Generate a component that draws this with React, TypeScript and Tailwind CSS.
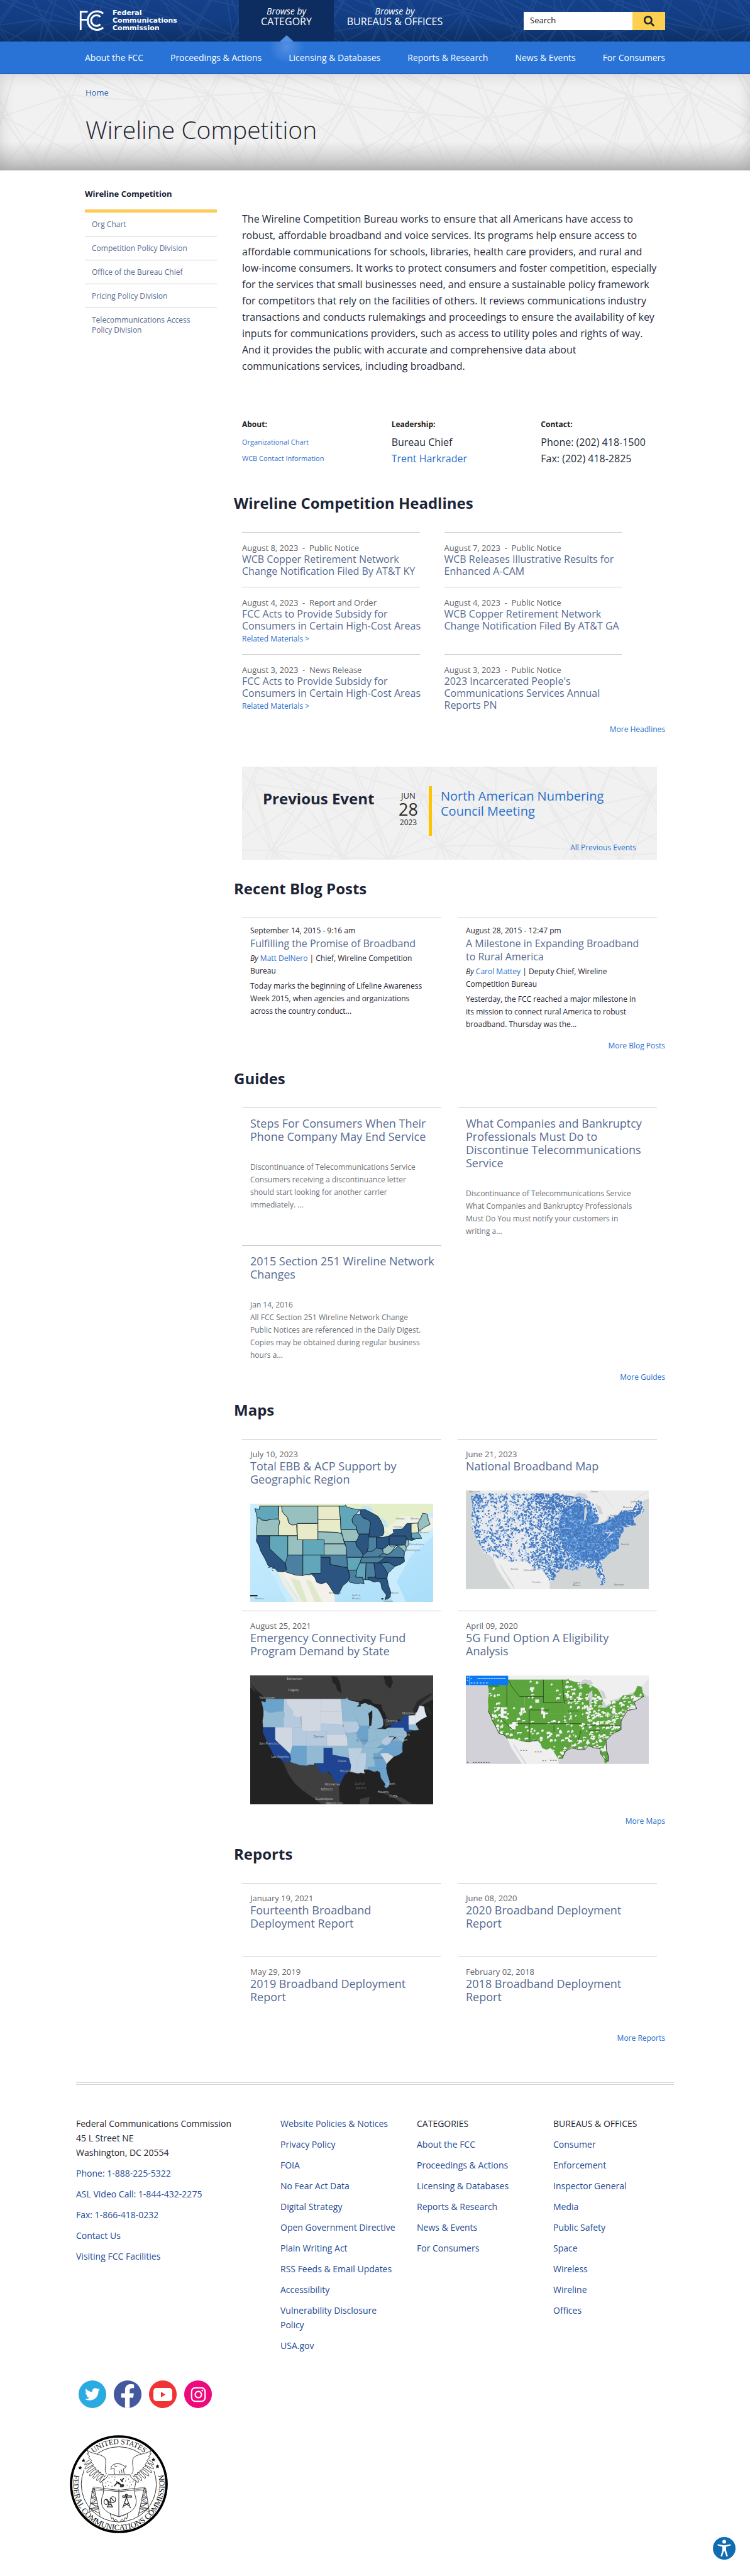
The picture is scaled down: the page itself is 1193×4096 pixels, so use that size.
import React from "react";
import { FaSearch, FaTwitter, FaFacebookF, FaInstagram } from "react-icons/fa";

/* ---------- helpers ---------- */

function makeRandom(seed: number) {
  let s = seed;
  return () => {
    s = (s * 1664525 + 1013904223) % 4294967296;
    return s / 4294967296;
  };
}

/* ---------- line texture used behind the header, hero and event box ---------- */

function webPath(seed: number, cols: number, rows: number, step: number) {
  const rnd = makeRandom(seed);
  const pts: number[][][] = [];
  for (let r = 0; r <= rows; r++) {
    const row: number[][] = [];
    for (let c = 0; c <= cols; c++) {
      row.push([
        Math.round((c - 0.5 + (r % 2) * 0.5 + (rnd() - 0.5) * 0.5) * step),
        Math.round((r - 0.5 + (rnd() - 0.5) * 0.5) * step),
      ]);
    }
    pts.push(row);
  }
  let d = "";
  const link = (a: number[], b?: number[]) => {
    if (b) d += `M${a[0]} ${a[1]}L${b[0]} ${b[1]}`;
  };
  for (let r = 0; r <= rows; r++) {
    for (let c = 0; c <= cols; c++) {
      const p = pts[r][c];
      link(p, pts[r][c + 1]);
      link(p, pts[r + 1]?.[c]);
      link(p, pts[r + 1]?.[c + 1]);
      link(p, pts[r + 1]?.[c - 1]);
      link(p, pts[r + 2]?.[c + 1]);
      link(p, pts[r + 2]?.[c - 1]);
      link(p, pts[r + 1]?.[c + 2]);
    }
  }
  return d;
}

const webs = {
  header: webPath(7, 18, 2, 75),
  hero: webPath(21, 12, 3, 110),
  event: webPath(5, 8, 3, 95),
};

function Web({ d, color, opacity, view }: { d: string; color: string; opacity: number; view: string }) {
  return (
    <svg
      className="absolute inset-0 h-full w-full"
      viewBox={view}
      preserveAspectRatio="xMidYMid slice"
      aria-hidden="true"
    >
      <path d={d} fill="none" stroke={color} strokeOpacity={opacity} strokeWidth="2" />
    </svg>
  );
}

/* ---------- maps ---------- */

const states: Record<string, string> = {
  WA: "84,37 185,37 185,106 150,107 120,114 95,112 85,102 70,100 65,75 58,50 82,55",
  OR: "70,100 85,102 95,112 120,114 150,107 185,106 192,120 185,150 185,196 68,196 65,160 70,130",
  ID: "187,37 202,37 205,65 220,85 235,100 238,125 255,138 282,137 285,196 185,196 185,150 192,120 185,106",
  MT: "202,37 397,37 397,130 285,130 282,137 255,138 238,125 235,100 220,85 205,65",
  WY: "285,130 397,130 397,218 287,218",
  ND: "397,37 510,37 518,107 397,107",
  SD: "397,107 518,107 520,150 522,185 500,178 397,175",
  NE: "397,175 500,178 522,185 530,200 540,240 430,240 430,218 397,218",
  KS: "430,240 540,240 548,255 550,300 430,300",
  MN: "510,37 540,37 545,30 550,40 580,50 625,57 600,80 590,90 580,110 585,130 603,145 605,163 520,163 518,107",
  IA: "520,163 605,163 610,180 620,195 605,225 538,227 530,200",
  WI: "590,90 600,80 625,80 640,100 668,110 680,125 672,187 620,187 610,180 603,145 585,130 580,110",
  MI: "625,57 650,55 690,75 720,92 735,115 750,150 752,180 745,195 710,205 672,203 672,185 680,125 668,110 640,100 625,80",
  IL: "620,187 672,187 668,203 667,260 658,290 640,300 625,275 603,250 600,228 612,210",
  IN: "668,203 710,203 712,262 690,278 660,283 667,260",
  OH: "710,205 745,205 780,197 780,240 765,255 745,268 712,262",
  MO: "538,227 600,228 603,250 625,275 640,300 632,312 552,312 550,300 548,255",
  KY: "640,300 660,283 690,278 712,262 745,268 748,290 720,310 636,312",
  TN: "632,312 760,310 740,328 720,342 622,342",
  AR: "552,312 632,312 622,342 605,380 560,382 555,365",
  LA: "560,382 605,380 600,418 638,420 645,455 625,450 610,455 566,445 568,410",
  MS: "622,342 656,342 652,432 638,432 638,420 600,418 605,380",
  AL: "656,342 698,342 708,418 665,420 668,432 652,432",
  GA: "698,342 735,342 755,370 772,400 768,425 708,425",
  FL: "665,420 708,418 708,425 768,425 775,460 788,500 785,525 770,537 760,530 765,515 740,480 735,450 720,440 700,445 668,432",
  SC: "735,342 775,338 812,360 772,400 755,370",
  NC: "760,310 860,313 862,335 840,350 812,360 775,338 735,342 720,342 740,328",
  VA: "720,310 748,290 770,297 790,285 815,262 830,250 850,270 862,285 860,313 760,310",
  WV: "748,290 745,268 765,255 780,240 785,252 815,250 790,285 770,297",
  PA: "780,197 868,197 875,215 870,245 780,247",
  NY: "780,197 805,180 800,163 850,160 875,130 898,130 900,210 920,215 900,222 875,215 868,197",
  NJ: "872,215 885,222 885,245 872,258 866,246",
  MD: "815,248 866,246 872,262 865,282 850,270 830,252",
  VT: "898,130 935,128 938,180 898,182",
  ME: "935,125 950,100 960,75 985,80 990,110 1000,135 970,150 940,172 935,150",
  MA: "898,182 938,180 955,210 930,212 900,208",
  CA: "68,196 137,196 137,265 222,345 228,375 215,390 180,388 165,370 130,358 115,325 90,280 80,250 66,225",
  NV: "137,196 235,196 235,320 222,345 137,265",
  UT: "235,196 287,196 287,218 316,218 316,300 235,300",
  CO: "316,218 430,218 430,300 316,300",
  AZ: "235,300 316,300 316,410 280,408 222,390 228,375 222,345 228,322",
  NM: "316,300 413,300 413,398 358,398 358,405 328,405 316,410",
  OK: "413,300 552,300 555,368 510,360 462,350 462,312 413,312",
  TX: "413,312 462,312 462,350 510,360 555,368 568,410 560,440 530,465 508,510 485,508 455,460 440,445 415,455 390,445 380,420 358,398 413,398",
};

function colorsOf(groups: Record<string, string>) {
  const out: Record<string, string> = {};
  Object.entries(groups).forEach(([color, list]) => list.split(" ").forEach((s) => (out[s] = color)));
  return out;
}

const supportColors = colorsOf({
  "#e9ebc8": "ID WY ND SD VT",
  "#97c0bf": "OR MT UT NE KS IA ME WV NJ MD",
  "#62a6b9": "WA NV CO NM MN AR MS MA",
  "#4b80a0": "AZ WI MO OK KY TN VA AL LA SC IN",
  "#2b5480": "CA TX IL MI OH PA NY GA FL NC",
});

const demandColors = colorsOf({
  "#d0d7e1": "MT ND SD WY NV KS SC",
  "#dfe6ef": "ME VT",
  "#b5c9df": "ID UT CO NE IA WV",
  "#bccfe0": "AR LA MS",
  "#92bad2": "OR MN WI MI NM OK IN OH KY TN PA MO AL MD NJ MA",
  "#6ba3cd": "WA AZ IL VA NC FL GA",
  "#1f4491": "CA TX NY",
});

const mexico =
  "M180 388L222 390L280 408L316 410L358 400L380 420L390 445L415 455L440 445L455 460L485 508L495 640H330L290 530L250 470L225 430Z";
const baja = "M180 388L200 392L225 440L262 500L300 560L285 565L240 500L205 445Z";
const canada =
  "M33 -120H1040V60L1000 75L985 80L960 75L935 125L898 130L875 130L850 160L800 163L790 185L745 200L752 180L735 115L690 75L625 57L550 40L540 37H84L58 20L33 -10Z";
const lakes =
  "M610 60L640 35L680 40L695 62L670 70L650 58L625 66ZM668 118L690 100L690 140L684 185L672 190L672 150ZM730 92L760 110L775 150L755 150L745 120ZM745 205L790 182L800 187L765 206ZM800 160L845 150L850 160L805 168Z";

function StateShapes({ colors, stroke, width = 2 }: { colors: Record<string, string> | string; stroke?: string; width?: number }) {
  return (
    <g strokeWidth={width} strokeLinejoin="round">
      {Object.entries(states).map(([id, points]) => {
        const fill = typeof colors === "string" ? colors : colors[id];
        return <polygon key={id} points={points} fill={fill} stroke={stroke ?? fill} />;
      })}
    </g>
  );
}

function Labels({ items, fill, size = 14 }: { items: [number, number, string][]; fill: string; size?: number }) {
  return (
    <g fill={fill} fontSize={size} fontFamily="Open Sans, sans-serif">
      {items.map(([x, y, t]) => (
        <text key={t} x={x} y={y}>
          {t}
        </text>
      ))}
    </g>
  );
}

function SupportMap() {
  return (
    <svg viewBox="33 24 983 527" className="block w-full" role="img" aria-label="Map of EBB and ACP support by state">
      <defs>
        <linearGradient id="sea" x1="0" y1="0" x2="1" y2="1">
          <stop offset="0" stopColor="#cdeeff" />
          <stop offset="1" stopColor="#a9def9" />
        </linearGradient>
      </defs>
      <rect x="33" y="24" width="983" height="527" fill="url(#sea)" />
      <path d="M33 60L70 200L140 380L230 551H330L200 388L760 440L800 551H870L820 440L900 300L1016 200V24Z" fill="#c9ecfc" />
      <path d={canada} fill="#e4efc9" />
      <path d="M760 160L850 90L1016 100V160L960 180L900 130L850 160L790 190Z" fill="#eff0e4" />
      <path d={mexico} fill="#f3f1e9" />
      <path d="M250 420L300 440L340 551H310L280 490ZM330 430L360 440L420 551H380Z" fill="#dfe8c8" />
      <path d={baja} fill="#f0ede2" />
      <path d={lakes} fill="#c4e6f4" />
      <StateShapes colors={supportColors} stroke="#10242e" width={3} />
      <path d="M130 368L150 362M148 374L165 372M150 382L158 384" stroke="#10242e" strokeWidth="3" />
      <path d="M738 535H748M756 536H764" stroke="#000" strokeWidth="7" />
      <path d="M33 518H72" stroke="#111" strokeWidth="7" />
      <Labels
        fill="#5b6468"
        items={[
          [60, 536, "Mexico"],
          [815, 110, "Ottawa"],
          [895, 108, "Montréal"],
          [800, 152, "Toronto"],
          [945, 182, "Boston"],
          [888, 246, "Philadelphia"],
          [868, 278, "Washington"],
          [455, 508, "Monterrey"],
          [580, 520, "Gulf of"],
          [580, 536, "Mexico"],
          [790, 506, "Miami"],
          [750, 550, "Havana"],
        ]}
      />
    </svg>
  );
}

function coverage(x: number, y: number) {
  const patch = Math.sin(x * 0.061 + Math.sin(y * 0.043) * 2.4) * Math.sin(y * 0.057 + Math.sin(x * 0.037) * 2);
  if (x > 400 + y * 0.1 && x < 540 && y < 120) return 1;
  if (x > 820 && y < 300) return 0.95;
  if (x < 110) return 0.7 + patch * 0.3;
  if (x < 350) return (y < 110 ? 0.42 : 0.27) + patch * 0.3;
  if (x < 540) return 0.42 + ((x - 350) / 190) * 0.45 + patch * 0.25;
  return 0.9 + patch * 0.12;
}

function coverageDots() {
  const rnd = makeRandom(99);
  const layers = { pale: "", light: "", mid: "" };
  for (let i = 0; i < 14000; i++) {
    const x = Math.round(55 + rnd() * 945);
    const y = Math.round(35 + rnd() * 505);
    const s = 4 + Math.round(rnd() * 5);
    const roll = rnd();
    const tone = rnd();
    const c = coverage(x, y);
    if (roll > c) continue;
    const cell = `M${x} ${y}h${s}v${s}h-${s}z`;
    const deep = c >= 0.95 ? 0.9 : y > 340 && x > 520 ? 0.5 : 0.66;
    if (tone < deep) layers.mid += cell;
    else if (tone < deep + (1 - deep) * 0.55) layers.light += cell;
    else layers.pale += cell;
  }
  return layers;
}

const dots = coverageDots();

function BroadbandMap() {
  return (
    <svg viewBox="28 39 986 531" className="block w-full" role="img" aria-label="National broadband map">
      <defs>
        <clipPath id="usShape">
          {Object.entries(states).map(([id, p]) => (
            <polygon key={id} points={p} />
          ))}
        </clipPath>
      </defs>
      <rect x="28" y="39" width="986" height="531" fill="#d2d5d6" />
      <g transform="translate(-7 16)">
        <path d={canada} fill="#ececec" />
        <path d="M33 0H1040V22H33Z" fill="#ececec" />
        <path d={mexico} fill="#efefef" />
        <path d={baja} fill="#efefef" />
        <path d={lakes} fill="#cfd3d5" />
        <path d="M880 140L960 60L1016 30M760 20L830 120" stroke="#d8d8d8" strokeWidth="3" fill="none" />
        <StateShapes colors="#e9eaed" />
        <g clipPath="url(#usShape)">
          <path
            d="M560 120L640 90L700 110L780 200L900 130L960 160L860 330L780 400L640 400L560 330L530 240Z"
            fill="#5c93d6"
          />
          <path d={dots.pale} fill="#a9d0f6" />
          <path d={dots.light} fill="#66a3e6" />
          <path d={dots.mid} fill="#4277be" />
        </g>
        <path d="M674 125L686 105L688 140L680 180L672 188Z" fill="#d5d6d6" />
      </g>
      <Labels
        fill="#5c5c5c"
        size={12}
        items={[
          [45, 49, "Vancouver"],
          [700, 49, "Ontario"],
          [915, 103, "Québec"],
          [875, 134, "Montréal"],
          [805, 178, "Toronto"],
          [606, 540, "Gulf of"],
          [606, 554, "Mexico"],
          [828, 551, "Bahamas"],
          [865, 333, "Norfolk"],
          [270, 466, "Sonora"],
          [340, 474, "Chihuahua"],
          [385, 536, "Torreón"],
        ]}
      />
    </svg>
  );
}

function DemandMap() {
  return (
    <svg viewBox="33 22 983 694" className="block w-full" role="img" aria-label="Emergency Connectivity Fund demand by state">
      <rect x="33" y="22" width="983" height="694" fill="#222222" />
      <path d="M33 22H1016V150L960 180L885 240L830 270L760 310L740 180L650 165L550 150H97L80 130L33 85Z" fill="#3f3f3f" />
      <path d="M208 480L255 490L340 505L400 500L470 560L508 600L515 716H420L330 650L280 590Z" fill="#3f3f3f" />
      <path d="M205 480L235 520L265 560L300 610L328 645L320 645L270 600L240 555Z" fill="#3f3f3f" />
      <path d="M620 716L625 685L675 675L668 716ZM720 645L770 655L850 680L900 710L960 716H860L800 675Z" fill="#3f3f3f" />
      <path d="M470 25L500 30L515 60L525 120L500 100L490 70L475 60ZM750 25H790L800 60L785 95L760 70ZM33 60L60 95L100 130L130 165L105 165L70 125Z" fill="#242424" />
      <path d="M905 210L930 160L1000 120L1016 122L960 165L920 215ZM970 190L1000 240L1012 230L990 195Z" fill="#2a2a2a" />
      <g transform="matrix(.942 0 0 .955 39 114)">
        <StateShapes colors={demandColors} />
        <path d={lakes} fill="#222" />
      </g>
      <Labels
        fill="#b9bcc0"
        size={17}
        items={[
          [230, 44, "Edmonton"],
          [235, 107, "Calgary"],
          [82, 146, "Vancouver"],
          [82, 393, "San Francisco"],
          [146, 464, "Los Angeles"],
          [503, 487, "Dallas"],
          [515, 541, "Houston"],
          [434, 612, "Monterrey"],
          [412, 641, "MÉXICO"],
          [382, 692, "Guadalajara"],
          [440, 714, "Mexico City"],
          [718, 655, "Havana"],
          [780, 677, "CUBA"],
          [762, 610, "Miami"],
          [762, 271, "Toronto"],
          [850, 232, "Montréal"],
          [815, 347, "New York"],
          [785, 375, "Washington"],
        ]}
      />
      <Labels
        fill="#5f6a75"
        size={17}
        items={[
          [373, 355, "Denver"],
          [602, 378, "St. Louis"],
          [690, 472, "Atlanta"],
          [595, 611, "Gulf of"],
          [600, 633, "Mexico"],
        ]}
      />
    </svg>
  );
}

function eligibilityHoles() {
  const rnd = makeRandom(1234);
  let d = "";
  for (let i = 0; i < 1250; i++) {
    const x = Math.round(60 + rnd() * 940);
    const y = Math.round(37 + rnd() * 500);
    const keep = x > 640 ? (y < 120 ? 0.2 : 0.95) : x > 520 ? 0.55 : x < 150 ? (y > 200 ? 0.9 : 0.3) : y > 300 ? 0.28 : 0.1;
    if (rnd() > keep) continue;
    const a = 5 + Math.round(rnd() * 12);
    const b = 4 + Math.round(rnd() * 10);
    d += `M${x} ${y}h${a}l4 ${b}h-${a}l-3 6l-5 -7z`;
  }
  return d;
}

const holes = eligibilityHoles();

function EligibilityMap() {
  return (
    <svg viewBox="28 1043 986 477" className="block w-full" role="img" aria-label="5G Fund option A eligibility">
      <rect x="28" y="1043" width="986" height="477" fill="#d2d1d8" />
      <path d="M28 1043H1014V1090L980 1100L940 1130L860 1160L790 1215L740 1125L650 1085L580 1066H28Z" fill="#efeff0" />
      <path d="M1014 1060L960 1120L1014 1160Z" fill="#e4e4e8" />
      <g transform="matrix(.9 0 0 .9 89 1033)">
        <path d={mexico} fill="#efeff0" />
        <path d={baja} fill="#efeff0" />
        <StateShapes colors="#5ba53c" />
        <g clipPath="url(#usShape)">
          <path d={holes} fill="#f3f1f3" />
          <path
            d="M232 202h36v12h-20v12h18v14h-18v12h20v14h-36zM304 290h30v22h-14v22h-26v-14h-12v-16h12zM438 155h22v20h-22zM408 82h24v14h-6v14h-12v-10h-10zM350 205h26v16h-14v24h-20v-14h8zM475 208h12v20h10v40h-12v-24h-12z"
            fill="#f3f1f3"
            transform="translate(-90 0)"
          />
        </g>
        <path d={lakes} fill="#cfcfd6" />
        <path
          d="M178 37V196M68 75H130M397 37V175H510M187 37L205 75L255 138H397M315 218H430M137 265L222 345M312 218V400M235 300H620M460 312V350M520 163H605M545 225H605M640 312H860M622 342L605 400L600 418M510 37L522 185M656 342H735"
          fill="none"
          stroke="#1d2b18"
          strokeWidth="2.5"
        />
        <path
          d="M66 225L80 250L90 280L115 325L130 358L165 370L180 388M566 445L610 455L645 455L668 432L700 445L735 450L740 480L765 515L785 525L788 500L775 460L772 400L812 360L862 335L862 285L885 245L900 222L955 210L940 172L1000 135M508 510L530 465L566 445M280 408L358 400"
          fill="none"
          stroke="#2a2a30"
          strokeWidth="3"
        />
      </g>
      <rect x="28" y="1045" width="228" height="50" fill="#0a79f5" />
      <path d="M47 1045V1095" stroke="#cfe4ff" strokeWidth="2" />
      <path d="M54 1060h8M90 1060h150M54 1084h10M70 1084h8M86 1084h10M104 1084h10M120 1084h10M138 1084h10M34 1055h6M34 1070h6" stroke="#d7e9ff" strokeWidth="5" strokeDasharray="7 2" />
      <path d="M34 1512h8M66 1512h90M322 1447h38M400 1455h36M440 1503h26M482 1501h42" stroke="#707078" strokeWidth="4" strokeDasharray="8 6" />
    </svg>
  );
}

/* ---------- logo, seal and round icons ---------- */

function FccMark() {
  return (
    <svg viewBox="66 54 140 120" className="h-[34px] w-10" fill="none" stroke="#fff" aria-hidden="true">
      <path d="M73.5 167V63.500H113M73 108H108" strokeWidth="10" />
      <path d="M200 74A52 52 0 1 0 200 152" strokeWidth="11" />
      <path d="M184 92A30 30 0 1 0 184 134" strokeWidth="11" />
    </svg>
  );
}

function Star({ x, y }: { x: number; y: number }) {
  return (
    <path
      transform={`translate(${x} ${y})`}
      d="M0 -11L3 -4L10 -3L5 2L7 10L0 6L-7 10L-5 2L-10 -3L-3 -4Z"
      fill="#111"
    />
  );
}

function Tower({ x }: { x: number }) {
  return (
    <g transform={`translate(${x} 700)`} stroke="#222" fill="none">
      <path d="M-4 0L-24 130M4 0L36 150M-4 0H4L-6 20L10 35L-10 52L16 66L-14 84L24 100L-18 112L32 136M-12 20H8M-10 50H14M-14 82H22M-18 112H30" strokeWidth="3" />
      <path d="M-8 20L14 52L-14 80L28 112L-22 128" strokeWidth="2" />
    </g>
  );
}

function Wing() {
  return (
    <g fill="#fff" stroke="#222" strokeWidth="3" strokeLinejoin="round">
      <path d="M168 490C200 520 262 510 272 545C278 580 262 600 278 625L270 655L250 665C215 690 170 650 155 600C150 570 190 560 185 540Z" stroke="none" />
      <path d="M168 490C190 520 255 512 270 540C280 575 258 600 278 625" fill="none" />
      <path d="M168 490L180 512L172 514L186 530L180 534L196 552L190 556L206 574L202 580L218 592L216 600L232 604L232 614L246 616L248 628L260 626L264 640L272 632" fill="none" />
      <path
        d="M186 548C160 560 150 580 166 572L190 562M192 566C160 580 150 604 168 594L202 576M204 582C170 600 160 624 178 614L214 590M216 600C184 616 176 644 194 632L228 606M230 612C200 630 196 656 212 644L242 616M246 626C222 640 216 668 230 658L256 632M258 636C240 650 234 678 248 668L266 646"
        fill="none"
      />
    </g>
  );
}

function Seal() {
  return (
    <svg viewBox="78 414 530 530" className="block size-[156px]" role="img" aria-label="United States Federal Communications Commission seal">
      <defs>
        <path id="arcTop" d="M125 680A218 218 0 0 1 561 680" />
        <path id="arcBottom" d="M113 590A247 247 0 1 0 573 590" />
      </defs>
      <circle cx="343" cy="679" r="258" fill="#fff" stroke="#000" strokeWidth="13" />
      <circle cx="343" cy="680" r="203" fill="none" stroke="#111" strokeWidth="3" />
      <g fontFamily="Liberation Serif, serif" fill="#111">
        <text textAnchor="middle" fontSize="40">
          <textPath href="#arcTop" startOffset="50%">
            UNITED STATES
          </textPath>
        </text>
        <text textAnchor="middle" fontSize="43">
          <textPath href="#arcBottom" startOffset="50%">
            FEDERAL COMMUNICATIONS COMMISSION
          </textPath>
        </text>
      </g>
      <Star x={152} y={551} />
      <Star x={134} y={590} />
      <Star x={530} y={546} />
      <Star x={552} y={583} />
      <Tower x={206} />
      <g transform="matrix(-1 0 0 1 690 0)">
        <Tower x={206} />
        <Wing />
      </g>
      <Wing />
      <path d="M203 694L343 712L486 696M203 701L343 720L486 703M203 708L343 728L486 710" fill="none" stroke="#222" strokeWidth="2" />
      <path
        d="M322 626C318 612 314 604 320 596C308 590 302 596 301 600C296 578 320 566 340 569C352 568 366 576 372 582L384 580C380 588 376 594 368 596L372 626"
        fill="#fff"
        stroke="#222"
        strokeWidth="3"
      />
      <path d="M318 580L334 584M344 606L350 622M358 600L360 620" stroke="#222" strokeWidth="3" />
      <path d="M296 838L304 866L312 860L318 878L326 868L344 886L362 868L370 878L376 860L386 866L392 838L344 856Z" fill="#fff" stroke="#222" strokeWidth="3" />
      <path
        d="M286 628H404C406 640 420 656 436 664C428 700 424 720 434 750C446 800 420 834 344 853C264 834 240 800 252 750C266 720 262 690 250 664C266 656 280 644 286 628Z"
        fill="#fff"
        stroke="#222"
        strokeWidth="3"
      />
      <path d="M260 702L343 712L428 702M343 706V850M262 710L343 720L426 710" fill="none" stroke="#222" strokeWidth="3" />
      <g fill="#333">
        {[
          [290, 645], [306, 640], [318, 655], [284, 664], [300, 670], [272, 672], [288, 686], [306, 692], [322, 642],
          [382, 640], [396, 652], [380, 662], [404, 668], [388, 684], [412, 682], [402, 694], [420, 664], [270, 690],
        ].map(([x, y]) => (
          <circle key={`${x}-${y}`} cx={x} cy={y} r="2.500" />
        ))}
      </g>
      <path d="M318 690L334 672M358 662L370 646M330 664L346 680M352 652L364 668M340 668L356 684" stroke="#222" strokeWidth="6" />
      <ellipse cx="360" cy="688" rx="12" ry="8" fill="#333" transform="rotate(-20 360 688)" />
      <g fill="none" stroke="#222" strokeWidth="4">
        <ellipse cx="275" cy="775" rx="12" ry="14" />
        <ellipse cx="311" cy="762" rx="15" ry="16" />
        <path d="M275 760L290 785M300 752L318 772M295 772L282 802M295 772L308 802M286 790H304M278 802H312" />
        <path d="M384 732V755M384 750L364 808M384 750L406 808M374 780L398 795M396 780L370 798M364 742H376M392 742H410M368 750H400" />
        <circle cx="368" cy="746" r="5" />
        <circle cx="408" cy="746" r="5" />
        <circle cx="384" cy="740" r="6" />
      </g>
    </svg>
  );
}

function AccessIcon() {
  return (
    <svg viewBox="0 0 36 36" className="block size-9" aria-hidden="true">
      <circle cx="18" cy="18" r="18" fill="#0f6cb0" />
      <circle cx="18" cy="7.500" r="3" fill="#fff" />
      <path
        d="M7.500 11.500L18 13.200L28.500 11.500L28.600 13.300L21 15.600L21 21L23.700 30.500L21.400 31L18.600 22.500H17.400L14.600 31L12.300 30.500L15 21V15.600L7.400 13.300Z"
        fill="#fff"
      />
    </svg>
  );
}

/* ---------- small text blocks ---------- */

function SectionTitle({ children }: { children: React.ReactNode }) {
  return <h2 className="mb-[30px] text-2xl leading-8 font-bold text-[#1c2436]">{children}</h2>;
}

function More({ children }: { children: React.ReactNode }) {
  return (
    <p className="mt-1 text-right text-[12px] leading-[18px]">
      <a href="#" className="text-[#2a6fcb]">
        {children}
      </a>
    </p>
  );
}

type Headline = { date: string; kind: string; title: string; related?: boolean };

const headlines: Headline[] = [
  { date: "August 8, 2023", kind: "Public Notice", title: "WCB Copper Retirement Network Change Notification Filed By AT&T KY" },
  { date: "August 7, 2023", kind: "Public Notice", title: "WCB Releases Illustrative Results for Enhanced A-CAM" },
  { date: "August 4, 2023", kind: "Report and Order", title: "FCC Acts to Provide Subsidy for Consumers in Certain High-Cost Areas", related: true },
  { date: "August 4, 2023", kind: "Public Notice", title: "WCB Copper Retirement Network Change Notification Filed By AT&T GA" },
  { date: "August 3, 2023", kind: "News Release", title: "FCC Acts to Provide Subsidy for Consumers in Certain High-Cost Areas", related: true },
  { date: "August 3, 2023", kind: "Public Notice", title: "2023 Incarcerated People's Communications Services Annual Reports PN" },
];

const posts = [
  {
    date: "September 14, 2015 - 9:16 am",
    title: "Fulfilling the Promise of Broadband",
    author: "Matt DelNero",
    role: "Chief, Wireline Competition Bureau",
    body: "Today marks the beginning of Lifeline Awareness Week 2015, when agencies and organizations across the country conduct...",
  },
  {
    date: "August 28, 2015 - 12:47 pm",
    title: "A Milestone in Expanding Broadband to Rural America",
    author: "Carol Mattey",
    role: "Deputy Chief, Wireline Competition Bureau",
    body: "Yesterday, the FCC reached a major milestone in its mission to connect rural America to robust broadband. Thursday was the...",
  },
];

const guides = [
  {
    title: "Steps For Consumers When Their Phone Company May End Service",
    body: "Discontinuance of Telecommunications Service Consumers receiving a discontinuance letter should start looking for another carrier immediately. ...",
  },
  {
    title: "What Companies and Bankruptcy Professionals Must Do to Discontinue Telecommunications Service",
    body: "Discontinuance of Telecommunications Service What Companies and Bankruptcy Professionals Must Do You must notify your customers in writing a...",
  },
  {
    title: "2015 Section 251 Wireline Network Changes",
    date: "Jan 14, 2016",
    body: "All FCC Section 251 Wireline Network Change Public Notices are referenced in the Daily Digest. Copies may be obtained during regular business hours a...",
  },
];

const maps = [
  { date: "July 10, 2023", title: "Total EBB & ACP Support by Geographic Region", Map: SupportMap },
  { date: "June 21, 2023", title: "National Broadband Map", Map: BroadbandMap },
  { date: "August 25, 2021", title: "Emergency Connectivity Fund Program Demand by State", Map: DemandMap },
  { date: "April 09, 2020", title: "5G Fund Option A Eligibility Analysis", Map: EligibilityMap },
];

const reports = [
  { date: "January 19, 2021", title: "Fourteenth Broadband Deployment Report" },
  { date: "June 08, 2020", title: "2020 Broadband Deployment Report" },
  { date: "May 29, 2019", title: "2019 Broadband Deployment Report" },
  { date: "February 02, 2018", title: "2018 Broadband Deployment Report" },
];

const sideLinks = [
  "Org Chart",
  "Competition Policy Division",
  "Office of the Bureau Chief",
  "Pricing Policy Division",
  "Telecommunications Access Policy Division",
];

const footerColumns = [
  {
    links: [
      "Website Policies & Notices", "Privacy Policy", "FOIA", "No Fear Act Data", "Digital Strategy",
      "Open Government Directive", "Plain Writing Act", "RSS Feeds & Email Updates", "Accessibility",
      "Vulnerability Disclosure Policy", "USA.gov",
    ],
  },
  {
    heading: "CATEGORIES",
    links: ["About the FCC", "Proceedings & Actions", "Licensing & Databases", "Reports & Research", "News & Events", "For Consumers"],
  },
  {
    heading: "BUREAUS & OFFICES",
    links: ["Consumer", "Enforcement", "Inspector General", "Media", "Public Safety", "Space", "Wireless", "Wireline", "Offices"],
  },
];

/* ---------- page parts ---------- */

function Header() {
  return (
    <header>
      <div className="relative bg-linear-to-b from-[#15418a] via-[#133d82] to-[#0d2f66]">
        <Web d={webs.header} color="#6f9be0" opacity={0.13} view="0 0 1193 66" />
        <div className="relative mx-auto flex h-[66px] w-full max-w-[951px] items-stretch">
          <a href="#" className="flex w-[259px] items-center gap-[13px] pl-[5px] text-white">
            <FccMark />
            <span className="font-['DejaVu_Sans'] text-[11px] leading-3 font-bold">
              Federal
              <br />
              Communications
              <br />
              Commission
            </span>
          </a>
          <button type="button" className="relative flex w-[151px] flex-col items-center bg-[#0d2d60] pt-2.5 text-white">
            <span className="text-[14px] leading-4 italic">Browse by</span>
            <span className="text-[16px] leading-4">CATEGORY</span>
            <span className="absolute bottom-0 left-1/2 size-0 -translate-x-1/2 border-x-[11px] border-b-[10px] border-x-transparent border-b-[#5590e0]" />
          </button>
          <button type="button" className="flex w-[194px] flex-col items-center pt-2.5 text-white">
            <span className="text-[14px] leading-4 italic">Browse by</span>
            <span className="text-[16px] leading-4">BUREAUS &amp; OFFICES</span>
          </button>
          <form className="mr-3.5 ml-auto flex h-[29px] self-center" onSubmit={(e) => e.preventDefault()}>
            <input
              type="text"
              aria-label="Search"
              placeholder="Search"
              className="w-[173px] bg-white px-2.5 text-[13px] text-black placeholder:text-[#111]"
            />
            <button type="submit" aria-label="Submit search" className="flex w-[52px] items-center justify-center bg-[#fdd14f] text-[#1c2436]">
              <FaSearch className="size-[17px]" />
            </button>
          </form>
        </div>
      </div>
      <nav className="relative border-b-2 border-[#2564c4] bg-[#2973d6]" aria-label="Category">
        <div className="absolute inset-x-0 top-0 mx-auto flex h-12 w-full max-w-[951px] pl-[299px]">
          <div className="h-8 w-[72px] bg-[radial-gradient(circle_at_50%_25%,#5490e2,transparent_65%)]" />
        </div>
        <ul className="relative mx-auto flex h-[50px] w-full max-w-[951px] items-center justify-between px-3.5 text-[14px] text-white">
          {footerColumns[1].links.map((l) => (
            <li key={l}>
              <a href="#">{l}</a>
            </li>
          ))}
        </ul>
      </nav>
    </header>
  );
}

function Hero() {
  return (
    <div className="relative bg-[#f1f1f1]">
      <Web d={webs.hero} color="#9a9a9a" opacity={0.1} view="0 0 1193 153" />
      <div className="absolute inset-0 bg-linear-to-b from-transparent from-70% to-[#bdbdbd] shadow-[inset_0_0_24px_rgba(0,0,0,0.14)]" />
      <div className="relative mx-auto h-[153px] w-full max-w-[951px] px-[15px] pt-5">
        <a href="#" className="block text-[13px] leading-[18px] text-[#2f66b5]">
          Home
        </a>
        <h1 className="mt-5 text-[39px] leading-[60px] font-light text-[#1f2430]">Wireline Competition</h1>
      </div>
    </div>
  );
}

function Sidebar() {
  return (
    <aside className="w-[210px] shrink-0 pt-[29px]">
      <h2 className="text-[13px] leading-4 font-bold text-[#1c2436]">Wireline Competition</h2>
      <ul className="mt-[17px] border-t-[5px] border-[#fdcb58]">
        {sideLinks.map((l, i) => (
          <li
            key={l}
            className={
              i < sideLinks.length - 1
                ? "border-b border-[#cfcfcf] px-[11px] pt-[11px] pb-2.5"
                : "px-[11px] pt-[11px]"
            }
          >
            <a href="#" className="block text-[12px] leading-4 text-[#566b91]">
              {l}
            </a>
          </li>
        ))}
      </ul>
    </aside>
  );
}

function PreviousEvent() {
  return (
    <section className="relative mx-[13px] mt-[50px] overflow-hidden bg-[#f1f1f1]">
      <Web d={webs.event} color="#9a9a9a" opacity={0.08} view="0 0 660 148" />
      <div className="relative px-[33px] pt-[31px] pb-2.5">
        <div className="flex">
          <h2 className="w-[209px] pt-1 text-2xl leading-8 font-bold text-[#1c2436]">Previous Event</h2>
          <div className="flex w-[55px] shrink-0 flex-col items-center pt-2 pr-2.5 text-[#2b2b2b]">
            <span className="text-[13px] leading-3.5">JUN</span>
            <span className="text-[27px] leading-[30px]">28</span>
            <span className="text-[12px] leading-3 font-medium">2023</span>
          </div>
          <div className="h-[79px] w-[5px] shrink-0 bg-[#ffc400]" />
          <h3 className="max-w-[300px] pt-1 pl-3.5 text-[20px] leading-6">
            <a href="#" className="text-[#2a6fcb]">
              North American Numbering Council Meeting
            </a>
          </h3>
        </div>
        <p className="mt-2.5 text-right text-[12px] leading-[18px]">
          <a href="#" className="text-[#2a6fcb]">
            All Previous Events
          </a>
        </p>
      </div>
    </section>
  );
}

function Main() {
  return (
    <main className="min-w-0 flex-1">
      <div className="px-[13px] pt-16">
        <p className="text-[16px] leading-[26px] text-[#1f2a3c]">
          The Wireline Competition Bureau works to ensure that all Americans have access to robust, affordable
          broadband and voice services. Its programs help ensure access to affordable communications for schools,
          libraries, health care providers, and rural and low-income consumers. It works to protect consumers and
          foster competition, especially for the services that small businesses need, and ensure a sustainable policy
          framework for competitors that rely on the facilities of others. It reviews communications industry
          transactions and conducts rulemakings and proceedings to ensure the availability of key inputs for
          communications providers, such as access to utility poles and rights of way. And it provides the public with
          accurate and comprehensive data about communications&nbsp;services, including broadband.
        </p>
        <div className="mt-[71px] -mr-[53px] grid grid-cols-3 text-[16px] leading-[26px] text-[#222a38]">
          <div>
            <h3 className="mb-1.5 text-[12px] leading-[18px] font-bold text-[#222]">About:</h3>
            <p className="text-[11px] leading-[26px]">
              <a href="#" className="text-[#2a6fcb]">Organizational Chart</a>
              <br />
              <a href="#" className="text-[#2a6fcb]">WCB Contact Information</a>
            </p>
          </div>
          <div>
            <h3 className="mb-1.5 text-[12px] leading-[18px] font-bold text-[#222]">Leadership:</h3>
            <p>Bureau Chief</p>
            <p>
              <a href="#" className="text-[#2a6fcb]">Trent Harkrader</a>
            </p>
          </div>
          <div>
            <h3 className="mb-1.5 text-[12px] leading-[18px] font-bold text-[#222]">Contact:</h3>
            <p>Phone: (202) 418-1500</p>
            <p>Fax: (202) 418-2825</p>
          </div>
        </div>
      </div>

      <section className="mt-[42px]">
        <SectionTitle>Wireline Competition Headlines</SectionTitle>
        <div className="mr-[69px] ml-[13px] grid grid-cols-2 gap-x-[39px]">
          {headlines.map((h) => (
            <article key={h.title + h.kind} className="border-t border-[#c9cbce] pt-[15px] pb-[15px]">
              <p className="text-[13px] leading-[18px] whitespace-pre text-[#5f6368]">
                {h.date}
                {"  -  "}
                {h.kind}
              </p>
              <h3 className="-mr-3 text-[16px] leading-[19px]">
                <a href="#" className="text-[#566b91]">
                  {h.title}
                </a>
              </h3>
              {h.related && (
                <a href="#" className="block pt-px text-[12px] leading-[19px] text-[#2a6fcb]">
                  Related Materials &gt;
                </a>
              )}
            </article>
          ))}
        </div>
        <More>More Headlines</More>
      </section>

      <PreviousEvent />

      <section className="mt-[30px]">
        <SectionTitle>Recent Blog Posts</SectionTitle>
        <div className="mx-[13px] grid grid-cols-2 gap-x-[26px]">
          {posts.map((p) => (
            <article key={p.title} className="border-t border-[#c9cbce] px-[13px] pt-2.5 pb-[11px] text-[12px] leading-5 text-[#1d2130]">
              <p>{p.date}</p>
              <h3 className="text-[16px] leading-[21px]">
                <a href="#" className="text-[#566b91]">
                  {p.title}
                </a>
              </h3>
              <p className="mt-[3px]">
                <em>By</em>{" "}
                <a href="#" className="text-[#2a6fcb]">
                  {p.author}
                </a>{" "}
                | {p.role}
              </p>
              <p className="mt-1 pr-3">{p.body}</p>
            </article>
          ))}
        </div>
        <More>More Blog Posts</More>
      </section>

      <section className="mt-[27px]">
        <SectionTitle>Guides</SectionTitle>
        <div className="mx-[13px] grid grid-cols-2 gap-x-[26px]">
          {guides.map((g) => (
            <article key={g.title} className="border-t border-[#c9cbce] px-[13px] pt-3.5 pb-3">
              <h3 className="-mr-2 text-[18px] leading-[21px]">
                <a href="#" className="text-[#566b91]">
                  {g.title}
                </a>
              </h3>
              <div className="mt-7 pr-3 text-[12px] leading-5 text-[#6b6f76]">
                {g.date && <p>{g.date}</p>}
                <p>{g.body}</p>
              </div>
            </article>
          ))}
        </div>
        <More>More Guides</More>
      </section>

      <section className="mt-[27px]">
        <SectionTitle>Maps</SectionTitle>
        <div className="mx-[13px] grid grid-cols-2 gap-x-[26px]">
          {maps.map(({ date, title, Map }) => (
            <article key={title} className="border-t border-[#c9cbce] px-[13px] pt-3.5 pb-3.5">
              <p className="text-[13px] leading-[18px] text-[#5f6368]">{date}</p>
              <h3 className="mb-7 text-[18px] leading-[21px]">
                <a href="#" className="text-[#566b91]">
                  {title}
                </a>
              </h3>
              <Map />
            </article>
          ))}
        </div>
        <More>More Maps</More>
      </section>

      <section className="mt-[27px]">
        <SectionTitle>Reports</SectionTitle>
        <div className="mx-[13px] grid grid-cols-2 gap-x-[26px]">
          {reports.map((r) => (
            <article key={r.title} className="border-t border-[#c9cbce] px-[13px] pt-3.5 pb-[42px]">
              <p className="text-[13px] leading-[18px] text-[#5f6368]">{r.date}</p>
              <h3 className="text-[18px] leading-[21px]">
                <a href="#" className="text-[#566b91]">
                  {r.title}
                </a>
              </h3>
            </article>
          ))}
        </div>
        <More>More Reports</More>
      </section>
    </main>
  );
}

function Footer() {
  return (
    <footer className="mx-auto mt-[61px] w-full max-w-[951px] pb-[69px] text-[14px] leading-[23px] text-[#1d2430]">
      <hr className="h-1 border-y border-[#d3d5d7]" />
      <div className="grid grid-cols-[325px_217px_217px_1fr] pt-[50px]">
        <div className="flex flex-col gap-2.5">
          <address className="not-italic">
            Federal Communications Commission
            <br />
            45 L Street NE
            <br />
            Washington, DC 20554
          </address>
          {["Phone: 1-888-225-5322", "ASL Video Call: 1-844-432-2275", "Fax: 1-866-418-0232", "Contact Us", "Visiting FCC Facilities"].map((l) => (
            <a key={l} href="#" className="text-[#1d4a94]">
              {l}
            </a>
          ))}
        </div>
        {footerColumns.map((c, i) => (
          <div key={i} className="flex flex-col gap-2.5 pr-7">
            {c.heading && <h2>{c.heading}</h2>}
            {c.links.map((l) => (
              <a key={l} href="#" className="text-[#1d4a94]">
                {l}
              </a>
            ))}
          </div>
        ))}
      </div>
      <div className="mt-11 flex gap-3 pl-1 text-white">
        <a href="#" aria-label="Twitter" className="flex size-11 items-center justify-center rounded-full bg-[#29aae1]">
          <FaTwitter className="size-6" />
        </a>
        <a href="#" aria-label="Facebook" className="flex size-11 items-end justify-center overflow-hidden rounded-full bg-[#43589f]">
          <FaFacebookF className="size-[38px]" />
        </a>
        <a href="#" aria-label="YouTube" className="flex size-11 items-center justify-center rounded-full bg-[#f03434]">
          <svg viewBox="0 0 30 21" className="w-[30px]" aria-hidden="true">
            <rect width="30" height="21" rx="5" fill="#fff" />
            <path d="M12 6L19 10.500L12 15Z" fill="#f03434" />
          </svg>
        </a>
        <a href="#" aria-label="Instagram" className="flex size-11 items-center justify-center rounded-full bg-[#ee0a7c]">
          <FaInstagram className="size-[27px]" />
        </a>
      </div>
      <div className="mt-[43px] -ml-2.5">
        <Seal />
      </div>
    </footer>
  );
}

export default function App() {
  return (
    <div className="relative bg-white font-['Open_Sans',sans-serif]">
      <Header />
      <Hero />
      <div className="mx-auto flex w-full max-w-[951px] gap-[27px] px-3.5">
        <Sidebar />
        <Main />
      </div>
      <Footer />
      <button type="button" aria-label="Accessibility options" className="absolute right-[23px] bottom-[27px]">
        <AccessIcon />
      </button>
    </div>
  );
}
